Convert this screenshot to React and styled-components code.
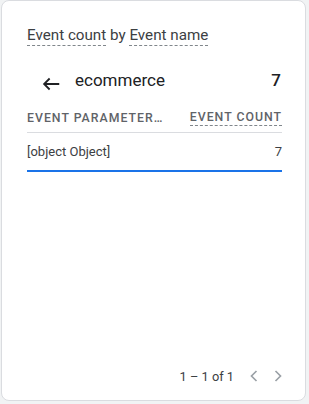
import React from 'react';
import styled, { createGlobalStyle } from 'styled-components';

const GlobalStyle = createGlobalStyle`
  html, body {
    margin: 0;
    padding: 0;
    background: #f1f3f4;
    font-family: Roboto, "Noto Sans", Arial, sans-serif;
  }
`;

const Card = styled.div`
  box-sizing: border-box;
  margin: 0 3px 0 1px;
  width: 305px;
  height: 401px;
  background: #fff;
  border: 1px solid #dadce0;
  border-radius: 8px;
  padding: 24px 23px 0 25px;
  display: flex;
  flex-direction: column;
`;

const Title = styled.div`
  font-size: 15.2px;
  color: #3c4043;
  line-height: 20px;
`;

const Dotted = styled.span`
  border-bottom: 1px dashed #80868b;
  padding-bottom: 1px;
`;

const DrillRow = styled.div`
  display: flex;
  align-items: center;
  margin-top: 22px;
  height: 26px;
  padding-left: 13px;
`;

const BackIcon = styled.svg`
  width: 22px;
  height: 22px;
  margin-right: 13px;
  margin-top: 7px;
`;

const DrillName = styled.div`
  flex: 1;
  font-size: 17px;
  color: #202124;
`;

const DrillValue = styled.div`
  font-size: 17px;
  font-weight: 500;
  color: #202124;
  padding-right: 1px;
`;

const HeaderRow = styled.div`
  display: flex;
  justify-content: space-between;
  align-items: center;
  height: 28px;
  margin-top: 11px;
  border-bottom: 1px solid #dadce0;
`;

const HeadCell = styled.span`
  font-size: 12.3px;
  font-weight: 500;
  letter-spacing: 1px;
  color: #5f6368;
  text-transform: uppercase;
  ${p => p.$dotted && `border-bottom: 1px dashed #80868b; padding-bottom: 1px;`}
`;

const DataRow = styled.div`
  display: flex;
  justify-content: space-between;
  align-items: center;
  height: 37px;
  font-size: 13px;
  color: #3c4043;
  border-bottom: 2px solid #1a73e8;
`;

const Spacer = styled.div`
  flex: 1;
`;

const Pager = styled.div`
  display: flex;
  align-items: center;
  justify-content: flex-end;
  height: 24px;
  margin-bottom: 12px;
  margin-right: -6px;
  font-size: 12.8px;
  color: #3c4043;
`;

const PageText = styled.span`
  margin-right: 6px;
`;

const PageBtn = styled.svg`
  width: 20px;
  height: 20px;
  margin-left: 4px;
`;

export default function App() {
  return (
    <>
      <GlobalStyle />
      <Card>
        <Title>
          <Dotted>Event count</Dotted> by <Dotted>Event name</Dotted>
        </Title>
        <DrillRow>
          <BackIcon viewBox="0 0 24 24">
            <path d="M21 12H4.5M10.5 6l-6 6 6 6" fill="none" stroke="#202124" strokeWidth="2" />
          </BackIcon>
          <DrillName>ecommerce</DrillName>
          <DrillValue>7</DrillValue>
        </DrillRow>
        <HeaderRow>
          <HeadCell>Event parameter…</HeadCell>
          <HeadCell $dotted>Event count</HeadCell>
        </HeaderRow>
        <DataRow>
          <span>[object Object]</span>
          <span>7</span>
        </DataRow>
        <Spacer />
        <Pager>
          <PageText>1 – 1 of 1</PageText>
          <PageBtn viewBox="0 0 24 24">
            <path d="M15 6l-6 6 6 6" fill="none" stroke="#9aa0a6" strokeWidth="2" />
          </PageBtn>
          <PageBtn viewBox="0 0 24 24">
            <path d="M9 6l6 6-6 6" fill="none" stroke="#9aa0a6" strokeWidth="2" />
          </PageBtn>
        </Pager>
      </Card>
    </>
  );
}
